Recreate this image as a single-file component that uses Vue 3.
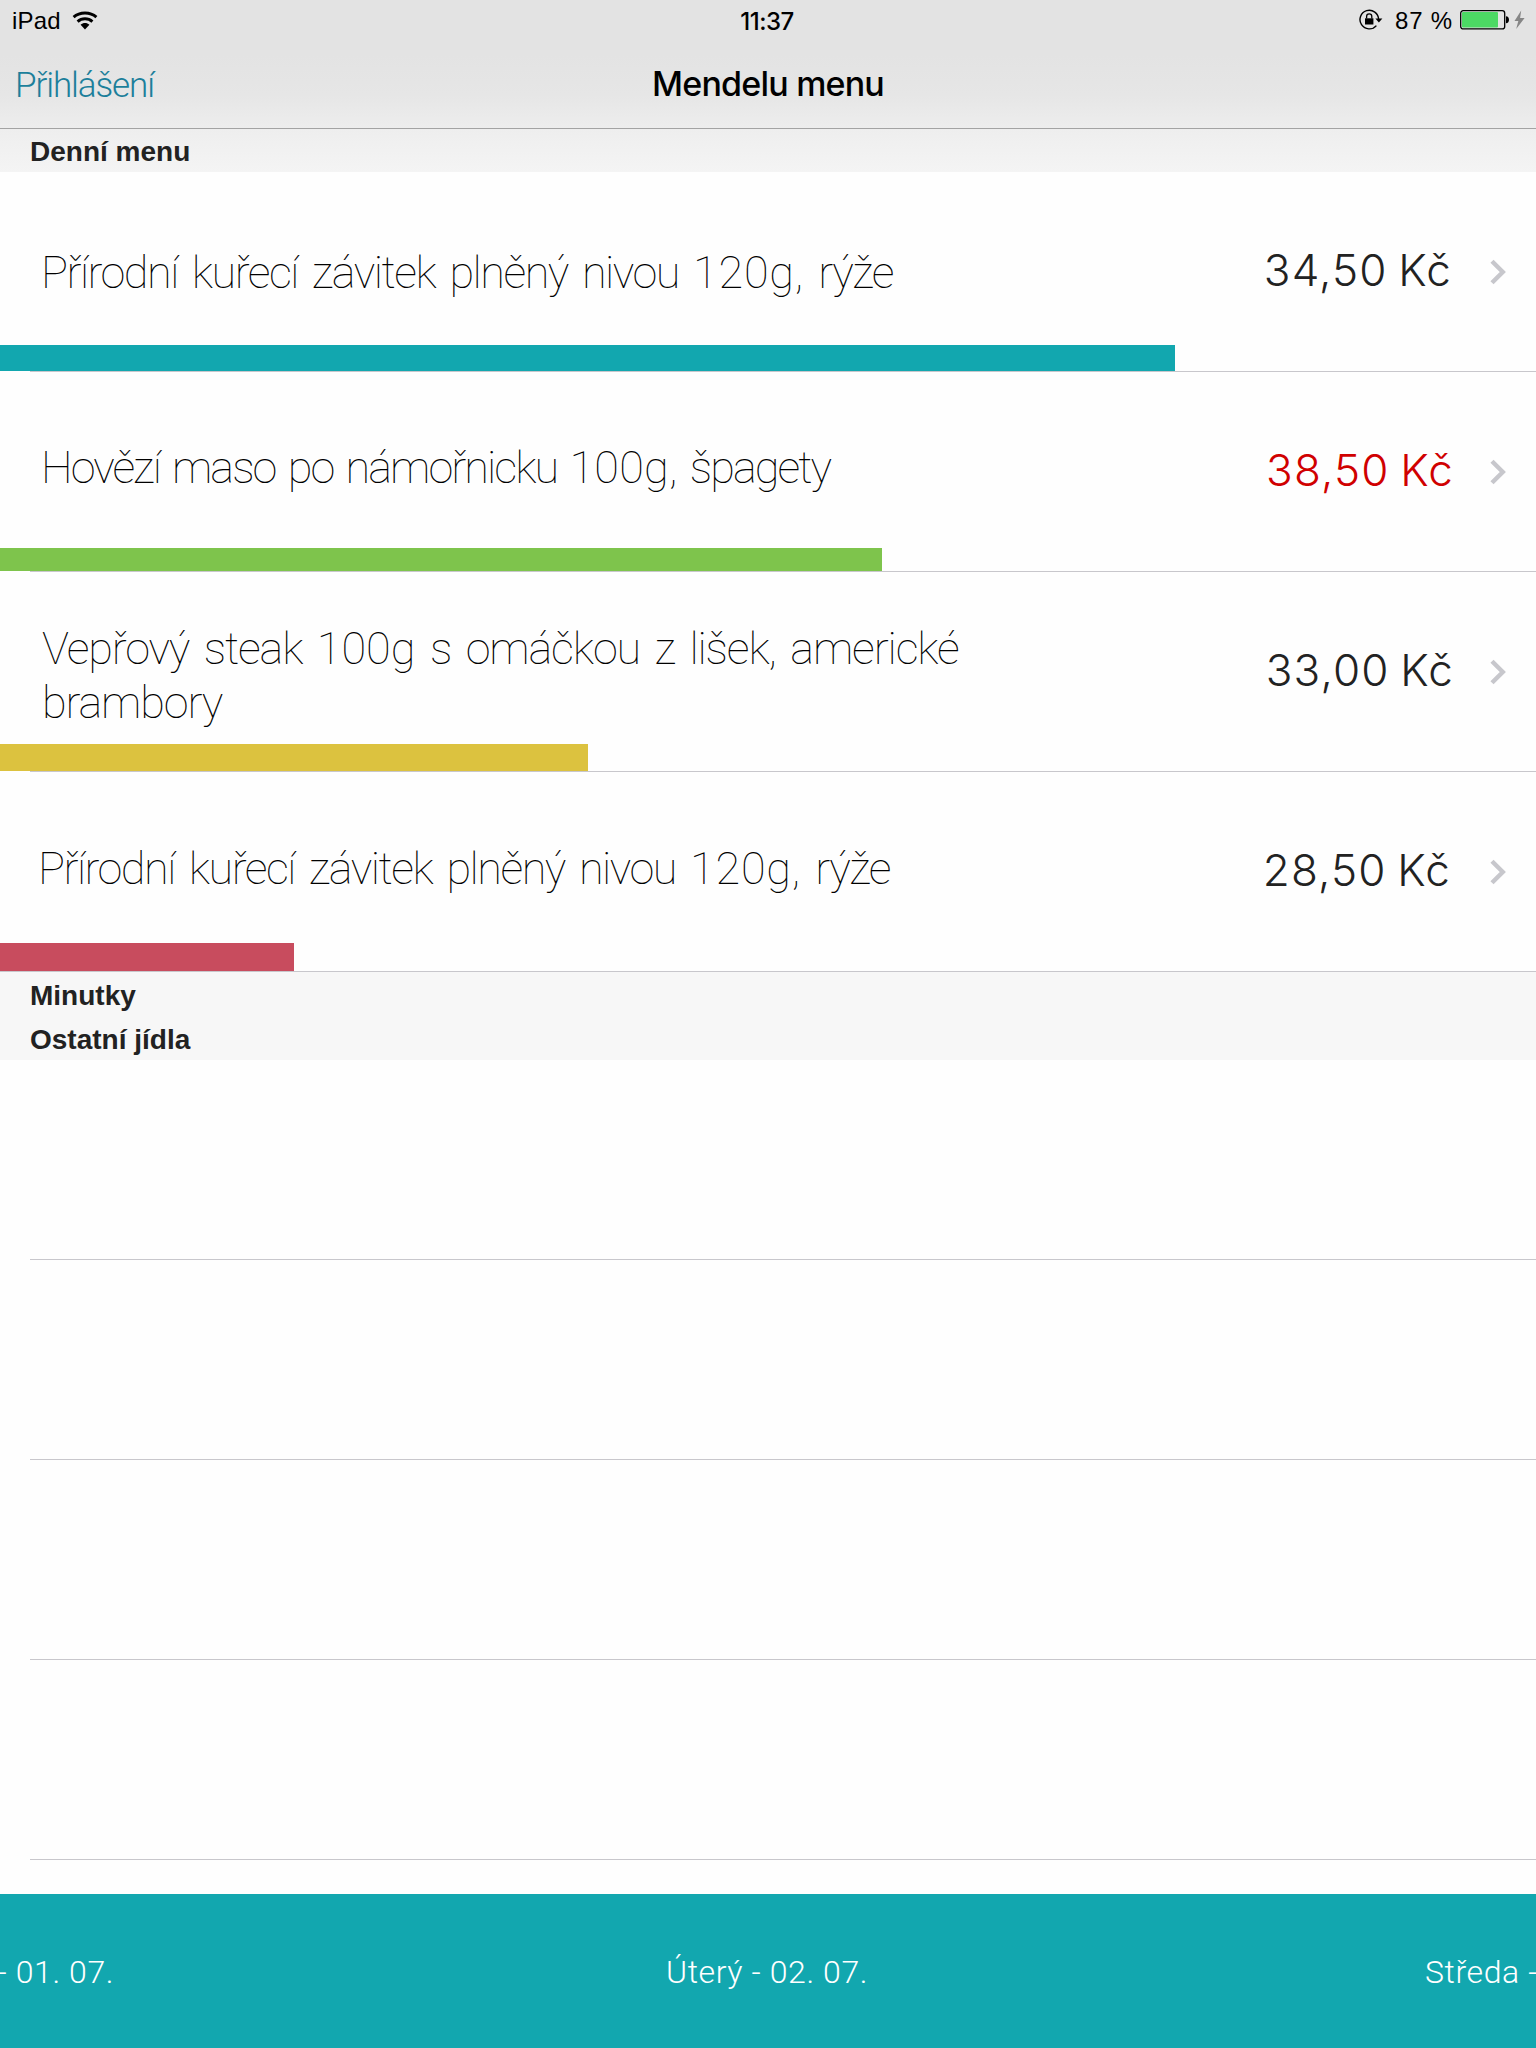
<script setup>
const meals = [
  { name: 'Přírodní kuřecí závitek plněný nivou', amount: '120g,', side: 'rýže', price: '34,50 Kč', color: '#12a7af', bar: 1175, barHeight: 26, indent: 41, spacing: -1.5, gap: 4.9, amountSpacing: 0.8, shift: 2, priceRight: 38 },
  { name: 'Hovězí maso po námořnicku', amount: '100g,', side: 'špagety', price: '38,50 Kč', color: '#7ec44c', bar: 882, barHeight: 23, indent: 41, spacing: -1.95, gap: 3.5, amountSpacing: 0.2, shift: -8, priceRight: 36, hot: true },
  { name: 'Vepřový steak', amount: '100g', side: 's omáčkou z lišek, americké brambory', price: '33,00 Kč', color: '#dcc23f', bar: 588, barHeight: 27, indent: 42, spacing: -1.15, gap: 4.9, amountSpacing: 0, shift: 7, priceRight: 36 },
  { name: 'Přírodní kuřecí závitek plněný nivou', amount: '120g,', side: 'rýže', price: '28,50 Kč', color: '#c84c5e', bar: 294, barHeight: 28, indent: 38, spacing: -1.5, gap: 4.9, amountSpacing: 0.8, shift: -6, priceRight: 39 },
]
</script>

<template>
  <div class="screen">
    <header class="top">
      <div class="status">
        <div class="side">
          <span class="device">iPad</span>
          <svg class="wifi" width="26" height="19" viewBox="0 0 26 19">
            <path d="M1.6 6.1C7.8.6 18.2.6 24.4 6.1" fill="none" stroke="#000" stroke-width="3" />
            <path d="M5.6 10.6c4.2-3.7 10.6-3.7 14.8 0" fill="none" stroke="#000" stroke-width="3" />
            <path d="M8.6 13.7c2.5-2.2 6.3-2.2 8.8 0L13 18.4z" />
          </svg>
        </div>
        <span class="clock">11:37</span>
        <div class="side right">
          <svg width="24" height="22" viewBox="0 0 24 22">
            <path d="M19.6 10.5A9.3 9.3 0 1 0 17.4 16.6" fill="none" stroke="#000" stroke-width="1.4" />
            <path d="M16.4 9.5h7L19.9 13.5z" />
            <path d="M6 9.3h8.4v6.2H6z" />
            <path d="M7.6 9.5V7.4a2.6 2.6 0 0 1 5.2 0v2.1" fill="none" stroke="#000" stroke-width="1.3" />
          </svg>
          <span class="percent">87 %</span>
          <svg width="50" height="20" viewBox="0 0 50 20">
            <rect x=".7" y=".7" width="44" height="18.2" rx="2.5" fill="none" stroke="#000" stroke-width="1.3" />
            <rect x="2" y="2" width="36" height="15.5" rx="1" fill="#4cd964" />
            <path d="M46 6.3c4 0 4 7 0 7z" />
          </svg>
          <svg class="bolt" width="11" height="20" viewBox="0 0 11 20">
            <path d="M7.2.5.5 10.9h3.8L2.2 19 10.6 8H6.1z" fill="#868686" />
          </svg>
        </div>
      </div>
      <nav class="nav">
        <a class="login">Přihlášení</a>
        <h1>Mendelu menu</h1>
        <span class="balance"></span>
      </nav>
    </header>

    <h2 class="section first">Denní menu</h2>
    <ul>
      <li v-for="(meal, i) in meals" :key="i" class="meal">
        <div class="info">
          <p :style="{ marginLeft: meal.indent + 'px', letterSpacing: meal.spacing + 'px', wordSpacing: meal.gap + 'px', marginTop: meal.shift + 'px' }">{{ meal.name }} <span :style="{ letterSpacing: meal.amountSpacing + 'px' }">{{ meal.amount }}</span> {{ meal.side }}</p>
          <span class="price" :class="{ hot: meal.hot }" :style="{ marginRight: meal.priceRight + 'px' }">{{ meal.price }}</span>
          <svg class="chevron" width="18" height="26" viewBox="0 0 18 26">
            <path d="M2 2.2 12.8 13 2 23.8" fill="none" stroke="#c7c7cc" stroke-width="4.4" />
          </svg>
        </div>
        <div class="bar" :style="{ width: meal.bar + 'px', height: meal.barHeight + 'px', background: meal.color }"></div>
        <div class="line"></div>
      </li>
    </ul>
    <h2 class="section">Minutky</h2>
    <h2 class="section">Ostatní jídla</h2>
    <div v-for="n in 4" :key="n" class="empty"><div class="line"></div></div>

    <footer>
      <span class="day prev">- 01. 07.</span>
      <span class="day current">Úterý - 02. 07.</span>
      <span class="day next">Středa -</span>
    </footer>
  </div>
</template>

<style>
body { margin: 0; }
</style>

<style scoped>
.screen {
  position: relative;
  width: 1536px;
  height: 2048px;
  display: flex;
  flex-direction: column;
  overflow: hidden;
  background: #fefefe;
  font-family: "Liberation Sans", sans-serif;
  color: #222;
}
.top {
  flex: none;
  height: 128px;
  border-bottom: 1px solid #a3a3a3;
  background: linear-gradient(#e3e3e3 0, #e3e3e3 55px, #e6e6e6 95px, #ededed 128px);
  color: #000;
}
.status { display: flex; height: 40px; align-items: center; font-size: 24px; }
.side { flex: 1; display: flex; align-items: center; padding-left: 12px; }
.side.right { justify-content: flex-end; padding: 0 11px 0 0; }
.device { letter-spacing: 0.2px; padding-top: 2px; }
.wifi { margin-left: 11px; }
.clock { font: 500 24px/40px Inter, sans-serif; letter-spacing: -0.5px; padding-top: 3px; margin-right: 3px; }
.percent { margin: 2px 7px 0 12px; letter-spacing: 0.8px; }
.bolt { margin-left: 4px; }
.nav { display: flex; align-items: center; height: 88px; }
.login { width: 652px; flex: none; box-sizing: border-box; padding: 3px 0 0 15px; font: 300 35px/88px Roboto, sans-serif; letter-spacing: -1.1px; color: #1c7f9b; }
.balance { flex: 1; }
h1 { margin: 0; font: 500 34px/88px Inter, sans-serif; letter-spacing: -0.8px; }
.section {
  flex: none;
  height: 44px;
  margin: 0;
  padding-left: 30px;
  background: #f7f7f7;
  font-size: 28px;
  line-height: 48px;
  font-weight: 700;
}
.section.first { height: 43px; line-height: 46px; background: linear-gradient(#eee, #f4f4f4); }
ul { list-style: none; margin: 0; padding: 0; }
.meal { position: relative; display: flex; height: 200px; flex-direction: column; justify-content: flex-end; }
.info { position: absolute; inset: 0; display: flex; align-items: center; }
.info p { width: 960px; margin: 0; font: 100 45px/54px Roboto, sans-serif; color: #000; }
.price { margin: -4px 0 0 auto; font: 300 44px/54px Inter, sans-serif; letter-spacing: 1.2px; word-spacing: -3px; }
.price.hot { color: #d00000; }
.chevron { margin-right: 28px; flex: none; }
.line { flex: none; height: 1px; margin-left: 30px; background: #c8c7cc; }
.meal:last-child .line { margin-left: 0; }
.empty { flex: none; height: 200px; display: flex; flex-direction: column; justify-content: flex-end; }
footer {
  position: absolute;
  top: 1894px;
  left: 0;
  width: 1536px;
  height: 154px;
  overflow: hidden;
  background: #12a7af;
  color: #fff;
  font: 300 32px/154px Roboto, sans-serif;
  letter-spacing: 0.6px;
}
.day { position: absolute; top: 1px; white-space: nowrap; }
.prev { right: 1422px; }
.current { left: 666px; }
.next { left: 1425px; }
</style>
